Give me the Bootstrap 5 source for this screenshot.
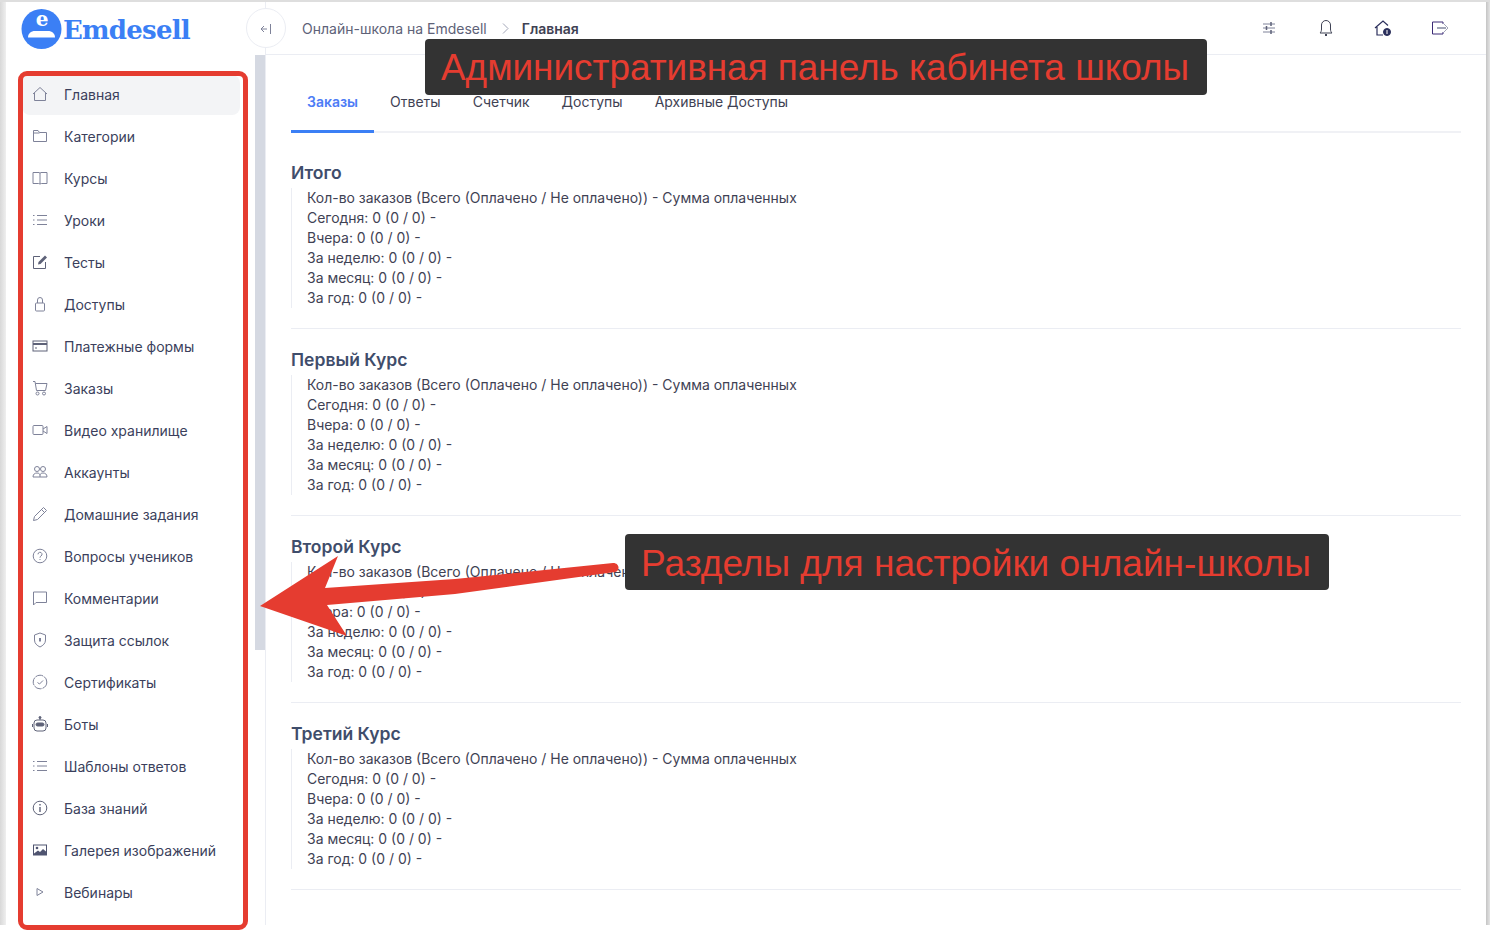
<!DOCTYPE html>
<html lang="ru">
  <head>
    <meta charset="UTF-8" />
    <meta name="viewport" content="width=device-width, initial-scale=1.0" />
    <link href="https://cdn.jsdelivr.net/npm/bootstrap@5.3.0/dist/css/bootstrap.min.css" rel="stylesheet" />
    <title>Emdesell</title>
    <style>
      html, body { height: 100%; overflow: hidden; }
      body { font-family: Inter, "Noto Sans", sans-serif; font-size: 13.97px; color: #3f4254; background: #fff; }
      .shot-wrap { position: relative; width: 1490px; height: 925px; border-top: 2px solid #dedede; padding-left: 6px; }
      .shot-wrap::before { content: ""; position: absolute; left: 0; top: 0; width: 6px; height: 100%; background: linear-gradient(90deg, #d8d8d8, #efefef); }
      .shot-wrap::after { content: ""; position: absolute; right: 0; top: 0; width: 4px; height: 100%; background: linear-gradient(90deg, #c4c4c4, #e4e4e4); }
      .side-col { position: relative; width: 260px; flex: none; border-right: 1px solid #ebedf3; }
      .logo-row { height: 52px; padding: 7px 0 0 15px; gap: 1px; }
      .logo-mark { margin-top: -4px; }
      .logo-name { font-family: "DejaVu Serif", serif; font-weight: 700; font-size: 26px; line-height: 42px; color: #3b7ff5; letter-spacing: -.75px; }
      .side-scroll { position: absolute; right: 0; top: 53px; width: 10px; height: 595px; background: #d5d9e2; }
      .side-menu { padding: 20px 0 0 16px; width: 234px; }
      .side-link { height: 42px; padding: 0 0 2px 10px; gap: 16px; color: #3b3f5c; border-radius: 8px; font-size: 14px; }
      .side-link.now { background: #f3f4f6; height: 40px; margin: 1px 0; }
      .side-link svg { width: 16px; height: 16px; flex: none; }
      .top-bar { height: 53px; border-bottom: 1px solid #ebedf3; padding: 0 41px 0 36px; font-size: 14px; }
      .crumb-a { color: #5e6278; }
      .crumb-sep { margin: 0 13px 0 15px; width: 7px; height: 11px; }
      .crumb-b { color: #3f4254; font-weight: 600; }
      .top-icon { width: 18px; height: 18px; margin-left: 39px; }
      .toggle-btn { position: absolute; left: 246px; top: 6px; width: 40px; height: 40px; border: 1px solid #ebedf3; border-radius: 50%; background: #fff; }
      .main-pane { padding: 0 29px 0 25px; }
      .tab-strip { margin-top: 26px; border-bottom: 2px solid #f0f1f5; height: 52px; }
      .tab-item { padding: 10px 16px 0; color: #3f4254; height: 52px; font-size: 14px; }
      .tab-item.now { color: #4d7cf6; font-weight: 600; border-bottom: 3px solid #3b7ff5; }
      .stat-block { padding: 20px 0 20px; border-bottom: 1px solid #ebedf3; }
      .stat-block:first-child { padding-top: 29px; }
      .stat-title { font-size: 17.55px; font-weight: 600; line-height: 22px; color: #3f4d6b; margin: 0 0 4px; }
      .stat-lines { border-left: 1px solid #ebedf3; padding-left: 15px; line-height: 20px; color: #3f4254; }
      .note-box { position: absolute; background: #333; color: #e53c30; font-family: "Liberation Sans", sans-serif; border-radius: 4px; height: 56px; line-height: 58px; padding-left: 16px; white-space: nowrap; }
      .note-top { left: 425px; top: 37px; width: 782px; font-size: 36.9px; }
      .note-mid { left: 625px; top: 532px; width: 704px; font-size: 37.05px; }
      .red-frame { position: absolute; left: 18px; top: 69px; width: 230px; height: 859px; border: 5px solid #e53c30; border-radius: 9px; }
      .red-arrow { position: absolute; left: 250px; top: 540px; width: 380px; height: 110px; }
    </style>
  </head>
  <body>
    <div class="shot-wrap d-flex">
      <!-- Sidebar -->
      <div class="side-col">
        <div class="logo-row d-flex align-items-start">
          <svg class="logo-mark" width="41" height="44" viewBox="0 0 41 44">
            <circle cx="20.500" cy="24" r="20" fill="#3b7ff5" />
            <text x="21" y="21" text-anchor="middle" font-family="DejaVu Serif" font-weight="700" font-size="20" fill="#fff">e</text>
            <path d="M7 32.500c0-4 3-6.500 7-6.500h13c4 0 7 2.500 7 6.500z" fill="#fff" />
          </svg>
          <span class="logo-name">Emdesell</span>
        </div>
        <div class="side-scroll"></div>
        <nav class="side-menu nav flex-column">
          <a class="side-link now d-flex align-items-center text-decoration-none" href="#">
            <svg viewBox="0 0 16 16" fill="none" stroke="#7e8299"><path d="M1 8l7-6.500L15 8M2.500 7v7.500h11V7" /></svg>Главная</a>
          <a class="side-link d-flex align-items-center text-decoration-none" href="#">
            <svg viewBox="0 0 16 16" fill="none" stroke="#7e8299"><path d="M1.500 13.500v-11h4.500l1.500 2h7v9z" /><path d="M1.500 5h6" /></svg>Категории</a>
          <a class="side-link d-flex align-items-center text-decoration-none" href="#">
            <svg viewBox="0 0 16 16" fill="none" stroke="#7e8299"><path d="M1 2.500h6c.6 0 1 .4 1 1 0-.6.4-1 1-1h6v11H9.500L8 14l-1.500-.5H1zM8 3.500V14" /></svg>Курсы</a>
          <a class="side-link d-flex align-items-center text-decoration-none" href="#">
            <svg viewBox="0 0 16 16" fill="none" stroke="#7e8299"><path d="M5 3.500h10M5 8h10M5 12.500h10" /><path d="M1 3.500h2M1 8h2M1 12.500h2" stroke-dasharray="1.500 .5" /></svg>Уроки</a>
          <a class="side-link d-flex align-items-center text-decoration-none" href="#">
            <svg viewBox="0 0 16 16" fill="none" stroke="#5e6278"><path d="M8 2.500H1.500v12h12V8" /><path d="M6 10.500l.5-2.500L13 1.500l2 2L8.500 10z" fill="#5e6278" stroke="none" /></svg>Тесты</a>
          <a class="side-link d-flex align-items-center text-decoration-none" href="#">
            <svg viewBox="0 0 16 16" fill="none" stroke="#7e8299"><rect x="3.500" y="7" width="9" height="8" rx="1" /><path d="M5.500 7V4a2.500 2.500 0 015 0v3" /></svg>Доступы</a>
          <a class="side-link d-flex align-items-center text-decoration-none" href="#">
            <svg viewBox="0 0 16 16" fill="none" stroke="#5e6278"><rect x="1" y="3" width="14" height="10" /><path d="M1 6h14" stroke-width="2" /><path d="M3 10h2" /></svg>Платежные формы</a>
          <a class="side-link d-flex align-items-center text-decoration-none" href="#">
            <svg viewBox="0 0 16 16" fill="none" stroke="#7e8299"><path d="M1 1.500h2l1.500 9h9l1.500-7H3.500" /><circle cx="5.500" cy="13.500" r="1.500" /><circle cx="12" cy="13.500" r="1.500" /></svg>Заказы</a>
          <a class="side-link d-flex align-items-center text-decoration-none" href="#">
            <svg viewBox="0 0 16 16" fill="none" stroke="#7e8299"><rect x="1" y="3.500" width="10" height="9" rx="1" /><path d="M11 7l4-2.500v7L11 9" /></svg>Видео хранилище</a>
          <a class="side-link d-flex align-items-center text-decoration-none" href="#">
            <svg viewBox="0 0 16 16" fill="none" stroke="#7e8299"><circle cx="5" cy="5" r="2.500" /><circle cx="11" cy="5" r="2.500" /><path d="M1 13c0-3 2-4 4-4s3 1 3 2.500V13zM8 11.500c0-1.500 1-2.500 3-2.500s4 1 4 4H8" /></svg>Аккаунты</a>
          <a class="side-link d-flex align-items-center text-decoration-none" href="#">
            <svg viewBox="0 0 16 16" fill="none" stroke="#7e8299"><path d="M1.500 14.500l1-4L11.500 1.500l3 3-9 9zM9.500 3.500l3 3" /></svg>Домашние задания</a>
          <a class="side-link d-flex align-items-center text-decoration-none" href="#">
            <svg viewBox="0 0 16 16" fill="none" stroke="#7e8299"><circle cx="8" cy="8" r="6.800" /><path d="M6 6.300a2 2 0 113 1.700c-.7.400-1 .8-1 1.700M8 11v1" /></svg>Вопросы учеников</a>
          <a class="side-link d-flex align-items-center text-decoration-none" href="#">
            <svg viewBox="0 0 16 16" fill="none" stroke="#7e8299"><path d="M1.500 15V2h13v10.500H4z" /></svg>Комментарии</a>
          <a class="side-link d-flex align-items-center text-decoration-none" href="#">
            <svg viewBox="0 0 16 16" fill="none" stroke="#7e8299"><path d="M8 1l5.500 2v5c0 3.500-2.500 5.500-5.500 7-3-1.500-5.500-3.500-5.500-7V3z" /><path d="M8 6v3.500" stroke-width="2" /></svg>Защита ссылок</a>
          <a class="side-link d-flex align-items-center text-decoration-none" href="#">
            <svg viewBox="0 0 16 16" fill="none" stroke="#7e8299"><circle cx="8" cy="8" r="6.800" stroke-dasharray="8 1" /><path d="M5.500 8.500l2 1.500 3.500-3.500" /></svg>Сертификаты</a>
          <a class="side-link d-flex align-items-center text-decoration-none" href="#">
            <svg viewBox="0 0 16 16" fill="none" stroke="#5e6278"><path d="M8 1v3" /><circle cx="8" cy="1.500" r="1" fill="#5e6278" /><rect x="2" y="4" width="12" height="11" rx="3" /><path d="M.5 8v3M15.500 8v3" /><rect x="4" y="7" width="8" height="3" rx="1.500" fill="#5e6278" /></svg>Боты</a>
          <a class="side-link d-flex align-items-center text-decoration-none" href="#">
            <svg viewBox="0 0 16 16" fill="none" stroke="#7e8299"><path d="M5 3.500h10M5 8h10M5 12.500h10" /><path d="M1 3.500h2M1 8h2M1 12.500h2" stroke-dasharray="1 .5" /></svg>Шаблоны ответов</a>
          <a class="side-link d-flex align-items-center text-decoration-none" href="#">
            <svg viewBox="0 0 16 16" fill="none" stroke="#5e6278"><circle cx="8" cy="8" r="6.800" /><path d="M8 7v5M8 4v1.500" stroke-width="1.400" /></svg>База знаний</a>
          <a class="side-link d-flex align-items-center text-decoration-none" href="#">
            <svg viewBox="0 0 16 16"><path d="M1 2.500h14v11H1z" fill="#4f5470" /><path d="M2 3.500h12v6l-3-2.500-3 3-2-1.500-4 3z" fill="#fff" /><circle cx="5" cy="6" r="1.300" fill="#4f5470" /></svg>Галерея изображений</a>
          <a class="side-link d-flex align-items-center text-decoration-none" href="#">
            <svg viewBox="0 0 16 16" fill="none" stroke="#7e8299"><path d="M5 4.500l6 3.500-6 3.500z" /></svg>Вебинары</a>
        </nav>
      </div>

      <!-- Main -->
      <div class="flex-grow-1">
        <div class="top-bar d-flex align-items-center">
          <span class="crumb-a">Онлайн-школа на Emdesell</span>
          <svg class="crumb-sep" viewBox="0 0 7 11" fill="none" stroke="#a1a5b7"><path d="M1 .5l5 5-5 5" /></svg>
          <span class="crumb-b">Главная</span>
          <span class="ms-auto d-flex align-items-center">
            <svg class="top-icon" viewBox="0 0 18 18" fill="none" stroke="#7e8299"><path d="M3 5h12M3 9h12M3 13h12" /><path d="M11 3v4M6.500 7v4M11 11v4" stroke="#5e6278" stroke-width="1.500" /></svg>
            <svg class="top-icon" viewBox="0 0 18 18" fill="none" stroke="#3f4254"><path d="M3 14c1-1 1.500-2 1.500-4V6a4.500 4.500 0 019 0v4c0 2 .5 3 1.500 4z" /><path d="M8 16h2" stroke-width="2" /></svg>
            <svg class="top-icon" viewBox="0 0 18 18" fill="none" stroke="#2b2f5c"><path d="M1 9l8-7 5 4.500M3 8v8h6" stroke-width="1.200" /><circle cx="13" cy="13" r="3.500" fill="#2b2f5c" /><path d="M13 11v4" stroke="#fff" /></svg>
            <svg class="top-icon" viewBox="0 0 18 18" fill="none" stroke="#3b2a76"><path d="M12 5V3H1.500v12H12v-2" /><path d="M6 9h9" stroke="#a1a5b7" stroke-width="2" /><path d="M13 5l4 4-4 4" stroke="#a1a5b7" /></svg>
          </span>
        </div>

        <div class="main-pane">
          <div class="tab-strip d-flex">
            <a class="tab-item now text-decoration-none" href="#">Заказы</a>
            <a class="tab-item text-decoration-none" href="#">Ответы</a>
            <a class="tab-item text-decoration-none" href="#">Счетчик</a>
            <a class="tab-item text-decoration-none" href="#">Доступы</a>
            <a class="tab-item text-decoration-none" href="#">Архивные Доступы</a>
          </div>

          <div id="statList"></div>
        </div>
      </div>

      <button class="toggle-btn p-0" type="button">
        <svg width="14" height="14" viewBox="0 0 14 14" fill="none" stroke="#7e8299"><path d="M11.500 2v10" /><path d="M8 7H2M5 4L2 7l3 3" /></svg>
      </button>

      <!-- Annotations -->
      <div class="note-box note-top">Административная панель кабинета школы</div>
      <svg class="red-arrow" viewBox="0 0 380 110"><path d="M363 21L205 37 75 46 88 14 10 64 97 94 77 63 205 52 365 30c5-1 5-9-2-9z" fill="#e53c30" /></svg>
      <div class="note-box note-mid">Разделы для настройки онлайн-школы</div>
      <div class="red-frame"></div>
    </div>

    <script src="https://cdn.jsdelivr.net/npm/bootstrap@5.3.0/dist/js/bootstrap.bundle.min.js"></script>
    <script>
      // blocks are all the same, only the course title differs
      const titles = ["Итого", "Первый Курс", "Второй Курс", "Третий Курс"];
      const rows = ["Сегодня", "Вчера", "За неделю", "За месяц", "За год"];
      document.getElementById("statList").innerHTML = titles
        .map(
          (t) => `<div class="stat-block">
            <h5 class="stat-title">${t}</h5>
            <div class="stat-lines">Кол-во заказов (Всего (Оплачено / Не оплачено)) - Сумма оплаченных<br>${rows
              .map((r) => `${r}: 0 (0 / 0) -`)
              .join("<br>")}</div>
          </div>`
        )
        .join("");
    </script>
  </body>
</html>
